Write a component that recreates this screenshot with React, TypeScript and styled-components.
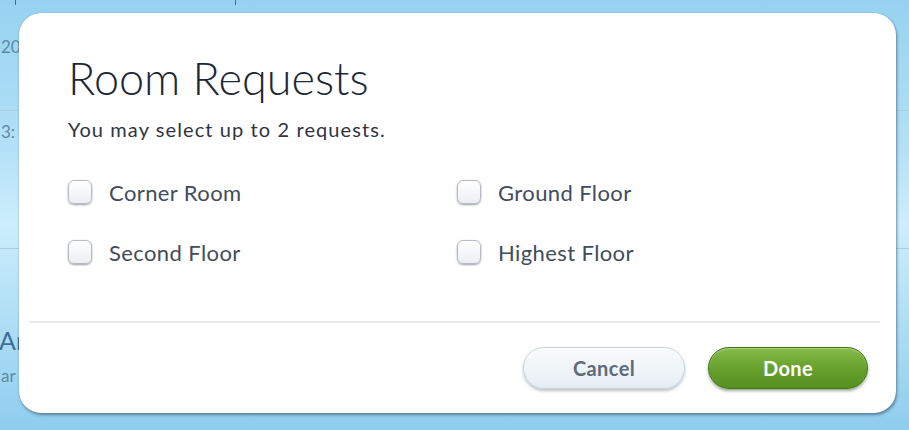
import React, { useState } from 'react'
import styled, { createGlobalStyle } from 'styled-components'

const GlobalStyle = createGlobalStyle`
  html, body {
    margin: 0;
    padding: 0;
  }
  body {
    font-family: Lato, 'Liberation Sans', sans-serif;
    overflow: hidden;
  }
`

const Page = styled.div`
  position: relative;
  width: 909px;
  height: 430px;
  overflow: hidden;
  background: linear-gradient(180deg, #96d2f0 0%, #b4e1f7 35%, #cdeefc 52%, #b2e0f6 72%, #8fcdee 100%);
`

const Backdrop = styled.div`
  display: flex;
  flex-direction: column;
  height: 100%;
`

const Ticks = styled.div`
  display: flex;
  gap: 219px;
  padding-left: 15px;
  height: 36px;
`

const Tick = styled.span`
  width: 1px;
  height: 5px;
  background: #3a6f90;
`

const BackRow = styled.div<{ $h: number; $line?: boolean }>`
  height: ${(p) => p.$h}px;
  border-bottom: ${(p) => (p.$line ? '1px solid #a9cfe2' : 'none')};
  color: #5f8aa6;
  font-family: Lato, sans-serif;
  font-size: 17px;
  padding-left: 1px;
`

const BackHeading = styled.div`
  color: #3c6f90;
  font-family: Lato, sans-serif;
  font-size: 25px;
  line-height: 30px;
  height: 46px;
  padding-top: 6px;
  box-sizing: border-box;
  margin-left: -1px;
`

const Modal = styled.div`
  position: absolute;
  left: 19px;
  top: 13px;
  width: 877px;
  height: 400px;
  box-sizing: border-box;
  background: #ffffff;
  border-radius: 22px;
  box-shadow: 1px 2px 3px rgba(40, 70, 90, 0.55), 0 0 1px rgba(40, 70, 90, 0.4);
  display: flex;
  flex-direction: column;
`

const Body = styled.div`
  height: 310px;
  box-sizing: border-box;
  padding: 39px 0 0 39px;
  margin: 0 16px 0 10px;
  border-bottom: 2px solid #e6e8ea;
`

const Title = styled.h1`
  margin: 0;
  font-family: Lato, sans-serif;
  font-weight: 300;
  font-size: 45px;
  line-height: 52px;
  color: #1c2837;
`

const Subtitle = styled.p`
  margin: 13px 0 0;
  font-family: Lato, sans-serif;
  font-size: 20px;
  line-height: 24px;
  letter-spacing: 1.1px;
  color: #2f3440;
`

const Options = styled.div`
  display: grid;
  grid-template-columns: 389px 1fr;
  row-gap: 36px;
  margin-top: 39px;
`

const Option = styled.label`
  display: flex;
  align-items: center;
  gap: 17px;
  height: 24px;
  cursor: pointer;
  font-family: Lato, sans-serif;
  font-size: 22px;
  letter-spacing: 0.4px;
  color: #414c5c;
`

const Box = styled.span<{ $on: boolean }>`
  width: 22px;
  height: 22px;
  border-radius: 6px;
  border: 1px solid #b6bbc4;
  background: linear-gradient(180deg, #ffffff 0%, #eceef2 100%);
  box-shadow: 0 1px 2px rgba(60, 70, 90, 0.5), inset 0 1px 1px rgba(255, 255, 255, 0.9);
  display: flex;
  align-items: center;
  justify-content: center;
  color: #4d8a1c;
  font-size: 15px;
  line-height: 1;
`

const Footer = styled.div`
  display: flex;
  justify-content: flex-end;
  gap: 23px;
  padding: 24px 28px 0 0;
`

const Button = styled.button<{ $primary?: boolean }>`
  width: ${(p) => (p.$primary ? 160 : 162)}px;
  height: 42px;
  border-radius: 21px;
  font-family: Lato, sans-serif;
  font-weight: 700;
  font-size: 20px;
  letter-spacing: 0.4px;
  cursor: pointer;
  color: ${(p) => (p.$primary ? '#ffffff' : '#5d6c7c')};
  border: 1px solid ${(p) => (p.$primary ? '#3f7416' : '#c9d3db')};
  background: ${(p) =>
    p.$primary
      ? 'linear-gradient(180deg, #86bd4a 0%, #6aa32f 45%, #558f1f 100%)'
      : 'linear-gradient(180deg, #fafcfd 0%, #eef3f7 60%, #e6edf2 100%)'};
  box-shadow: ${(p) =>
    p.$primary
      ? '0 2px 3px rgba(40, 60, 20, 0.45), inset 0 1px 1px rgba(255, 255, 255, 0.35)'
      : '0 2px 3px rgba(90, 105, 120, 0.4), inset 0 1px 0 #ffffff'};
`

const options = ['Corner Room', 'Ground Floor', 'Second Floor', 'Highest Floor']

export default function App() {
  const [picked, setPicked] = useState<string[]>([])
  const toggle = (o: string) =>
    setPicked((p) => (p.includes(o) ? p.filter((x) => x !== o) : p.length < 2 ? [...p, o] : p))

  return (
    <Page>
      <GlobalStyle />
      <Backdrop>
        <Ticks>
          <Tick />
          <Tick />
        </Ticks>
        <BackRow $h={74} $line>20</BackRow>
        <BackRow $h={137} $line>
          <div style={{ paddingTop: 10 }}>3:</div>
        </BackRow>
        <BackRow $h={70} />
        <BackHeading>Ar</BackHeading>
        <BackRow $h={30}>ar</BackRow>
      </Backdrop>
      <Modal>
        <Body>
          <Title>Room Requests</Title>
          <Subtitle>You may select up to 2 requests.</Subtitle>
          <Options>
            {options.map((o) => (
              <Option key={o} onClick={() => toggle(o)}>
                <Box $on={picked.includes(o)}>{picked.includes(o) ? '✓' : ''}</Box>
                {o}
              </Option>
            ))}
          </Options>
        </Body>
        <Footer>
          <Button>Cancel</Button>
          <Button $primary>Done</Button>
        </Footer>
      </Modal>
    </Page>
  )
}
